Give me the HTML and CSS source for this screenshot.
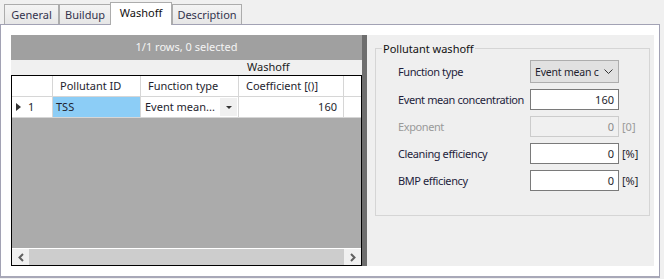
FILE: index.html
```html
<!DOCTYPE html>
<html lang="en">
<head>
    <meta charset="UTF-8">
    <title>Washoff</title>
    <link rel="stylesheet" href="styles.css">
</head>
<body>

<div class="tabs">
    <div class="tab tab-general">General</div>
    <div class="tab tab-buildup">Buildup</div>
    <div class="tab tab-washoff active">Washoff</div>
    <div class="tab tab-desc">Description</div>
</div>

<div class="panel">
    <div class="grid">
        <div class="grid-status">1/1 rows, 0 selected</div>
        <div class="grid-band"><span>Washoff</span></div>
        <div class="grid-box">
            <div class="row head">
                <div class="cell c-rh"></div>
                <div class="cell c-id">Pollutant ID</div>
                <div class="cell c-fn">Function type</div>
                <div class="cell c-co">Coefficient [()]</div>
                <div class="cell c-x"></div>
            </div>
            <div class="row data">
                <div class="cell c-rh"><span class="arrow"></span>1</div>
                <div class="cell c-id sel">TSS</div>
                <div class="cell c-fn">Event mean...<span class="drop"><span class="tri"></span></span></div>
                <div class="cell c-co num">160</div>
                <div class="cell c-x"></div>
            </div>
            <div class="grid-empty"></div>
            <div class="hscroll">
                <span class="sbtn">
                    <svg width="8" height="9" viewBox="0 0 8 9"><path d="M6 1 L2.5 4.5 L6 8" fill="none" stroke="#606060" stroke-width="2"/></svg>
                </span>
                <span class="thumb"></span>
                <span class="sbtn">
                    <svg width="8" height="9" viewBox="0 0 8 9"><path d="M2 1 L5.5 4.5 L2 8" fill="none" stroke="#606060" stroke-width="2"/></svg>
                </span>
            </div>
        </div>
    </div>

    <div class="splitter"></div>

    <div class="props">
        <fieldset class="group">
            <legend>Pollutant washoff</legend>
            <div class="form">
                <label>Function type</label>
                <div class="select"><span class="sel-text">Event mean c</span>
                    <svg class="chev" width="9" height="6" viewBox="0 0 9 6"><path d="M0.5 0.5 L4.5 4.5 L8.5 0.5" fill="none" stroke="#333" stroke-width="1"/></svg>
                </div>
                <span></span>

                <label>Event mean concentration</label>
                <div class="input">160</div>
                <span></span>

                <label class="dis">Exponent</label>
                <div class="input disabled">0</div>
                <span class="unit dis">[0]</span>

                <label>Cleaning efficiency</label>
                <div class="input">0</div>
                <span class="unit">[%]</span>

                <label>BMP efficiency</label>
                <div class="input">0</div>
                <span class="unit">[%]</span>
            </div>
        </fieldset>
    </div>
</div>

</body>
</html>
```

FILE: styles.css
```css
body {
    margin: 0;
    background-color: #f0f0f0;
    font-family: "Noto Sans", "Open Sans", sans-serif;
    font-size: 11px;
    color: #1e1e2e;
    width: 664px;
    height: 279px;
    overflow: hidden;
}

/* tab strip */
.tabs {
    display: flex;
    align-items: flex-end;
    height: 24px;
    padding-left: 4px;
}
.tab {
    box-sizing: border-box;
    height: 20px;
    border: 1px solid #acacac;
    border-bottom: none;
    background: linear-gradient(#f4f4f4, #e6e6e6);
    color: #33334d;
    text-align: center;
    line-height: 19px;
}
.tab-general { width: 55px; }
.tab-buildup { width: 52px; }
.tab-washoff { width: 62px; margin-left: -1px; }
.tab-desc { width: 70px; }
.tab.active {
    height: 23px;
    margin-bottom: -1px;
    background: #fff;
    color: #111;
    line-height: 19px;
    position: relative;
    z-index: 1;
}

/* main panel */
.panel {
    box-sizing: border-box;
    width: 660px;
    height: 254px;
    background: #fff;
    border: 1px solid #a2a2b4;
    border-bottom: 2px solid #a8a8b8;
    padding: 10px 5px 10px 10px;
    display: flex;
}

/* grid */
.grid {
    width: 351px;
    display: flex;
    flex-direction: column;
}
.grid-status {
    height: 25px;
    line-height: 24px;
    background: #a0a0a0;
    color: #f4f4f4;
    text-align: center;
}
.grid-band {
    height: 15px;
    line-height: 14px;
    background: #f0f0f0;
    color: #222;
    padding-left: 236px;
}
.grid-box {
    flex: 1;
    border: 1px solid #000;
    background: #ababab;
    display: flex;
    flex-direction: column;
}
.row {
    display: flex;
    height: 21px;
    background: #fff;
}
.cell {
    box-sizing: border-box;
    height: 21px;
    line-height: 20px;
    border-right: 1px solid #d6d6d6;
    border-bottom: 1px solid #d6d6d6;
    padding-left: 3px;
    white-space: nowrap;
    overflow: hidden;
    position: relative;
}
.head .cell { padding-left: 7px; }
.c-rh { width: 41px; }
.c-id { width: 88px; }
.c-fn { width: 98px; }
.c-co { width: 105px; }
.c-x { width: 17px; border-right: none; }
.data .c-rh { padding-left: 16px; }
.data .c-fn { padding-left: 4px; }
.arrow {
    position: absolute;
    left: 4px;
    top: 6px;
    border-left: 5px solid #333;
    border-top: 4px solid transparent;
    border-bottom: 4px solid transparent;
}
.sel { background: #8ccdf6; }
.num { text-align: right; padding-right: 6px; }
.drop {
    position: absolute;
    right: 1px;
    top: 1px;
    width: 17px;
    height: 18px;
    background: #f0f0f0;
}
.tri {
    position: absolute;
    left: 6px;
    top: 8px;
    border-top: 3px solid #333;
    border-left: 3px solid transparent;
    border-right: 3px solid transparent;
}
.grid-empty { flex: 1; }
.hscroll {
    height: 16px;
    border-top: 1px solid #fff;
    background: #f0f0f0;
    display: flex;
    align-items: center;
}
.sbtn {
    width: 17px;
    height: 16px;
    display: flex;
    align-items: center;
    justify-content: center;
}
.thumb {
    flex: 1;
    height: 16px;
    background: #cdcdcd;
}

.splitter {
    width: 5px;
    background: #6e6e6e;
}

/* property panel */
.props {
    flex: 1;
    background: #efefef;
    padding: 6px 4px 0 8px;
}
.group {
    margin: 0;
    height: 175px;
    box-sizing: border-box;
    border: 1px solid #d5d5d5;
    padding: 4px 0 0 0;
}
.group legend {
    padding: 0 1px;
    margin-left: 6px;
    color: #111;
}
.form {
    display: grid;
    grid-template-columns: 132px 89px auto;
    row-gap: 6px;
    align-items: center;
    padding-left: 22px;
}
.form label {
    color: #1e1e3c;
    white-space: nowrap;
    letter-spacing: -0.4px;
}
.dis { color: #9a9a9a !important; }
.select {
    box-sizing: border-box;
    height: 23px;
    line-height: 21px;
    border: 1px solid #adadad;
    background: #e1e1e1;
    padding-left: 4px;
    position: relative;
}
.sel-text {
    white-space: nowrap;
    font-size: 10.5px;
    letter-spacing: -0.2px;
}
.chev {
    position: absolute;
    right: 5px;
    top: 8px;
}
.input {
    box-sizing: border-box;
    height: 21px;
    line-height: 19px;
    border: 1px solid #7a7a7a;
    background: #fff;
    text-align: right;
    padding-right: 4px;
}
.input.disabled {
    border-color: #cccccc;
    background: #f0f0f0;
    color: #8a8a8a;
}
.unit { padding-left: 3px; }
```
